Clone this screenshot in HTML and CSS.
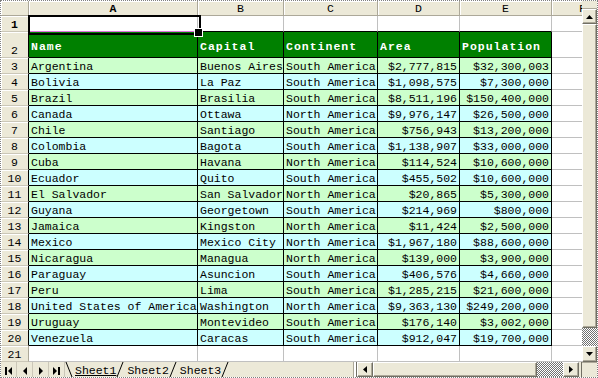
FILE: index.html
```html
<!DOCTYPE html>
<html>
<head>
<meta charset="utf-8">
<link rel="stylesheet" href="styles.css">
</head>
<body>
<div class="main">
  <div class="sheet">
    <div class="row">
      <div class="c ch"></div><div class="c ch act">A</div><div class="c ch">B</div><div class="c ch">C</div><div class="c ch">D</div><div class="c ch">E</div><div class="c ch chf">F</div>
    </div>
    <div class="row">
      <div class="c rh act">1</div><div class="c sel"></div><div class="c kb"></div><div class="c kb"></div><div class="c kb"></div><div class="c kb"></div><div class="c f"></div>
    </div>
    <div class="row">
      <div class="c rh k r2">2</div><div class="c d hd">Name</div><div class="c d hd">Capital</div><div class="c d hd">Continent</div><div class="c d hd">Area</div><div class="c d hd">Population</div><div class="c f"></div>
    </div>
    <div class="row gr"><div class="c rh k">3</div><div class="c d">Argentina</div><div class="c d">Buenos Aires</div><div class="c d">South America</div><div class="c d n">$2,777,815</div><div class="c d n">$32,300,003</div><div class="c f"></div></div>
    <div class="row cy"><div class="c rh k">4</div><div class="c d">Bolivia</div><div class="c d">La Paz</div><div class="c d">South America</div><div class="c d n">$1,098,575</div><div class="c d n">$7,300,000</div><div class="c f"></div></div>
    <div class="row gr"><div class="c rh k">5</div><div class="c d">Brazil</div><div class="c d">Brasilia</div><div class="c d">South America</div><div class="c d n">$8,511,196</div><div class="c d n">$150,400,000</div><div class="c f"></div></div>
    <div class="row cy"><div class="c rh k">6</div><div class="c d">Canada</div><div class="c d">Ottawa</div><div class="c d">North America</div><div class="c d n">$9,976,147</div><div class="c d n">$26,500,000</div><div class="c f"></div></div>
    <div class="row gr"><div class="c rh k">7</div><div class="c d">Chile</div><div class="c d">Santiago</div><div class="c d">South America</div><div class="c d n">$756,943</div><div class="c d n">$13,200,000</div><div class="c f"></div></div>
    <div class="row cy"><div class="c rh k">8</div><div class="c d">Colombia</div><div class="c d">Bagota</div><div class="c d">South America</div><div class="c d n">$1,138,907</div><div class="c d n">$33,000,000</div><div class="c f"></div></div>
    <div class="row gr"><div class="c rh k">9</div><div class="c d">Cuba</div><div class="c d">Havana</div><div class="c d">North America</div><div class="c d n">$114,524</div><div class="c d n">$10,600,000</div><div class="c f"></div></div>
    <div class="row cy"><div class="c rh k">10</div><div class="c d">Ecuador</div><div class="c d">Quito</div><div class="c d">South America</div><div class="c d n">$455,502</div><div class="c d n">$10,600,000</div><div class="c f"></div></div>
    <div class="row gr"><div class="c rh k">11</div><div class="c d">El Salvador</div><div class="c d">San Salvador</div><div class="c d">North America</div><div class="c d n">$20,865</div><div class="c d n">$5,300,000</div><div class="c f"></div></div>
    <div class="row cy"><div class="c rh k">12</div><div class="c d">Guyana</div><div class="c d">Georgetown</div><div class="c d">South America</div><div class="c d n">$214,969</div><div class="c d n">$800,000</div><div class="c f"></div></div>
    <div class="row gr"><div class="c rh k">13</div><div class="c d">Jamaica</div><div class="c d">Kingston</div><div class="c d">North America</div><div class="c d n">$11,424</div><div class="c d n">$2,500,000</div><div class="c f"></div></div>
    <div class="row cy"><div class="c rh k">14</div><div class="c d">Mexico</div><div class="c d">Mexico City</div><div class="c d">North America</div><div class="c d n">$1,967,180</div><div class="c d n">$88,600,000</div><div class="c f"></div></div>
    <div class="row gr"><div class="c rh k">15</div><div class="c d">Nicaragua</div><div class="c d">Managua</div><div class="c d">North America</div><div class="c d n">$139,000</div><div class="c d n">$3,900,000</div><div class="c f"></div></div>
    <div class="row cy"><div class="c rh k">16</div><div class="c d">Paraguay</div><div class="c d">Asuncion</div><div class="c d">South America</div><div class="c d n">$406,576</div><div class="c d n">$4,660,000</div><div class="c f"></div></div>
    <div class="row gr"><div class="c rh k">17</div><div class="c d">Peru</div><div class="c d">Lima</div><div class="c d">South America</div><div class="c d n">$1,285,215</div><div class="c d n">$21,600,000</div><div class="c f"></div></div>
    <div class="row cy"><div class="c rh k">18</div><div class="c d">United States of America</div><div class="c d">Washington</div><div class="c d">North America</div><div class="c d n">$9,363,130</div><div class="c d n">$249,200,000</div><div class="c f"></div></div>
    <div class="row gr"><div class="c rh k">19</div><div class="c d">Uruguay</div><div class="c d">Montevideo</div><div class="c d">South America</div><div class="c d n">$176,140</div><div class="c d n">$3,002,000</div><div class="c f"></div></div>
    <div class="row cy"><div class="c rh k">20</div><div class="c d">Venezuela</div><div class="c d">Caracas</div><div class="c d">South America</div><div class="c d n">$912,047</div><div class="c d n">$19,700,000</div><div class="c f"></div></div>
    <div class="row">
      <div class="c rh">21</div><div class="c"></div><div class="c"></div><div class="c"></div><div class="c"></div><div class="c"></div><div class="c f"></div>
    </div>
  </div>
  <div class="vscroll">
    <div class="split"></div>
    <div class="btn vbtn"><svg width="7" height="4" viewBox="0 0 7 4"><path d="M3.5 0L7 4H0z"/></svg></div>
    <div class="thumb"></div>
    <div class="track vtrack"></div>
    <div class="btn vbtn vlast"><svg width="7" height="4" viewBox="0 0 7 4"><path d="M0 0H7L3.5 4z"/></svg></div>
  </div>
</div>
<div class="bottom">
  <div class="nav">
    <div class="nb"><svg width="7" height="8" viewBox="0 0 7 8"><rect x="0" y="0" width="2" height="8"/><path d="M7 0V8L3 4z"/></svg></div>
    <div class="nb"><svg width="4" height="8" viewBox="0 0 4 8"><path d="M4 0V8L0 4z"/></svg></div>
    <div class="nb"><svg width="4" height="8" viewBox="0 0 4 8"><path d="M0 0V8L4 4z"/></svg></div>
    <div class="nb"><svg width="7" height="8" viewBox="0 0 7 8"><path d="M0 0V8L4 4z"/><rect x="5" y="0" width="2" height="8"/></svg></div>
  </div>
  <div class="tabs">
    <svg class="slant" width="8" height="15" viewBox="0 0 8 15"><path d="M1 0L7 15" stroke="#000" fill="none"/></svg>
    <span class="tab on">Sheet1</span>
    <svg class="slant" width="8" height="15" viewBox="0 0 8 15"><path d="M7 0L1 15" stroke="#000" fill="none"/></svg>
    <span class="tab">Sheet2</span>
    <svg class="slant" width="8" height="15" viewBox="0 0 8 15"><path d="M7 0L1 15" stroke="#000" fill="none"/></svg>
    <span class="tab">Sheet3</span>
    <svg class="slant" width="8" height="15" viewBox="0 0 8 15"><path d="M7 0L1 15" stroke="#000" fill="none"/></svg>
  </div>
  <div class="hsplit"></div>
  <div class="hscroll">
    <div class="btn hbtn"><svg width="4" height="7" viewBox="0 0 4 7"><path d="M4 0V7L0 3.5z"/></svg></div>
    <div class="thumb"></div>
    <div class="track htrack"></div>
    <div class="btn hbtn"><svg width="4" height="7" viewBox="0 0 4 7"><path d="M0 0V7L4 3.5z"/></svg></div>
  </div>
  <div class="gap"></div>
  <div class="corner"></div>
</div>
</body>
</html>
```

FILE: styles.css
```css
* { box-sizing: border-box; }
html, body { margin: 0; padding: 0; }
body {
  width: 598px;
  height: 378px;
  border: 1px dotted #808080;
  background: #fff;
  font-family: "Liberation Mono", "DejaVu Sans Mono", monospace;
  font-size: 11.5px;
  color: #000;
  overflow: hidden;
  display: flex;
  flex-direction: column;
}
.main { display: flex; height: 361px; flex: none; }
.sheet {
  display: grid;
  grid-template-columns: 28px 169px 86px 94px 82px 92px 30px;
  grid-template-rows: 15px 16px 26px repeat(19, 16px);
  width: 581px;
}
.row { display: contents; }
.c {
  border-right: 1px solid #c0c0c0;
  border-bottom: 1px solid #c0c0c0;
  padding: 3px 2px 0;
  line-height: 12px;
  white-space: nowrap;
  overflow: hidden;
}
.ch {
  background: #ece9d8;
  border-right-color: #aca899;
  border-bottom-color: #aca899;
  box-shadow: inset 1px 1px 0 #fff;
  text-align: center;
  padding-top: 2px;
}
.chf { text-align: left; padding-left: 27px; border-right: none; }
.rh {
  background: #ece9d8;
  border-right-color: #aca899;
  border-bottom-color: #cbc7b8;
  box-shadow: inset 1px 1px 0 #fff;
  text-align: center;
  padding-left: 0;
  padding-right: 0;
}
.r2 { padding-top: 13px; }
.act { font-weight: bold; }
.k { border-right-color: #000; }
.kb { border-bottom-color: #000; }
.d { border-color: #000; }
.gr .d { background: #ccffcc; }
.cy .d { background: #ccffff; }
.hd {
  background: #008000;
  color: #fff;
  font-weight: bold;
  letter-spacing: 1px;
  padding-top: 9px;
}
.n { text-align: right; }
.f { border-right: none; }

.sel {
  position: relative;
  z-index: 2;
  overflow: visible;
  border-bottom-color: #e070e0;
}
.sel::before {
  content: "";
  position: absolute;
  left: -1px;
  top: -1px;
  width: 169px;
  height: 16px;
  border: 2px solid #000;
}
.sel::after {
  content: "";
  position: absolute;
  left: 165px;
  top: 12px;
  width: 7px;
  height: 7px;
  background: #000;
  border: 1px solid #fff;
}

.vscroll {
  width: 15px;
  display: flex;
  flex-direction: column;
  background: #ece9d8;
}
.split { height: 8px; flex: none; border-bottom: 1px solid #aca899; }
.btn {
  background: #ece9d8;
  border: 1px solid;
  border-color: #fff #716f64 #716f64 #fff;
  box-shadow: inset -1px -1px 0 #aca899;
  display: flex;
  align-items: center;
  justify-content: center;
  flex: none;
}
.btn svg { display: block; fill: #000; }
.vbtn { height: 15px; }
.vlast { height: 16px; }
.thumb {
  flex: 1;
  background: #ece9d8;
  border: 1px solid;
  border-color: #fff #716f64 #716f64 #fff;
  box-shadow: inset -1px -1px 0 #aca899;
}
.track {
  flex: none;
  background: repeating-conic-gradient(#fff 0 25%, #707070 0 50%) 0 0 / 2px 2px;
}
.vtrack { height: 18px; }

.bottom {
  display: flex;
  height: 15px;
  flex: none;
  background: #ece9d8;
}
.nav { display: flex; width: 64px; flex: none; }
.nb {
  width: 16px;
  display: flex;
  align-items: center;
  justify-content: center;
  padding-top: 3px;
  border-right: 1px solid #cbc7b8;
}
.nb svg { display: block; fill: #000; }
.tabs {
  width: 288px;
  flex: none;
  display: flex;
  align-items: flex-start;
}
.slant { display: block; flex: none; }
.tab { line-height: 12px; padding-top: 3px; margin-left: 3px; }
.tab:first-of-type { margin-left: 2px; }
.tab.on { text-decoration: underline; }
.hsplit {
  width: 4px;
  flex: none;
  border-left: 1px solid #aca899;
  border-right: 1px solid #716f64;
  background: #fff;
}
.hscroll { display: flex; width: 222px; flex: none; }
.hbtn { width: 16px; }
.htrack { width: 26px; }
.gap { width: 3px; flex: none; border-right: 1px solid #716f64; }
.corner { width: 15px; flex: none; border-top: 1px solid #aca899; }
```
